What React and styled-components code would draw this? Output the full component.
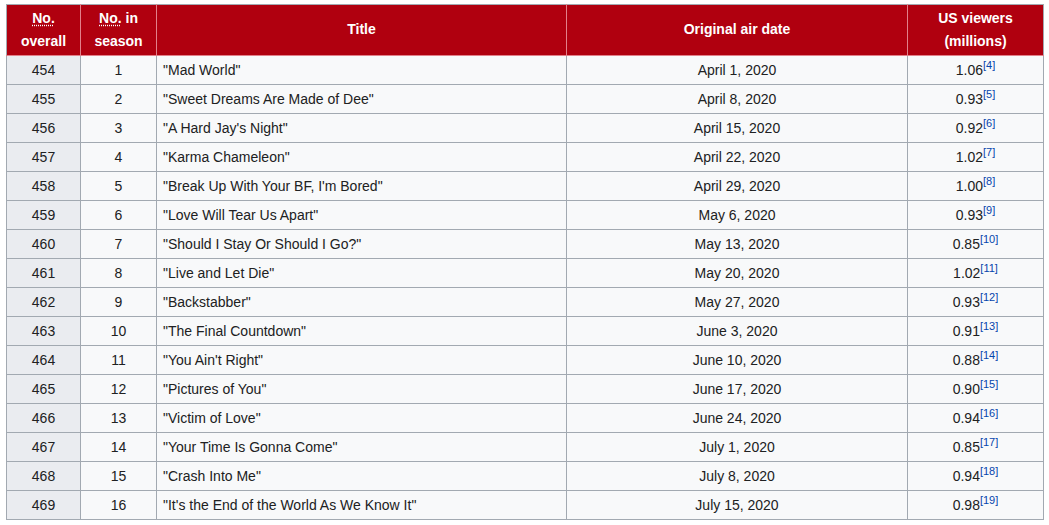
import React from "react";
import styled, { createGlobalStyle } from "styled-components";

const Global = createGlobalStyle`
  html, body { margin: 0; padding: 0; background: #ffffff; }
  body { font-family: "Liberation Sans", Arial, sans-serif; color: #202122; }
`;

const Wrap = styled.div`
  padding: 4px 0 0 6px;
`;

const Table = styled.table`
  border-collapse: collapse;
  table-layout: fixed;
  width: 1038px;
  font-size: 14px;
  line-height: 22.4px;
  background: #f8f9fa;
  border: 1px solid #a2a9b1;
`;

const HeadCell = styled.th`
  background: #b0000f;
  color: #ffffff;
  font-weight: bold;
  text-align: center;
  padding: 2px 5px 3px;
  height: 45px;
  border: 1px solid #a2a9b1;
  border-left-color: #e2808a;
  border-right-color: #e2808a;
  border-bottom-color: #e2808a;
  &:first-child { border-left-color: #a2a9b1; }
  &:last-child { border-right-color: #a2a9b1; }
`;

const Abbr = styled.abbr`
  text-decoration: underline dotted;
  text-underline-offset: 2px;
  cursor: help;
`;

const RowHead = styled.th`
  background: #eaecf0;
  font-weight: normal;
  text-align: center;
  padding: 2px 5px;
  height: 24px;
  border: 1px solid #a2a9b1;
`;

const Cell = styled.td`
  text-align: ${(p) => (p.$left ? "left" : "center")};
  padding: 2px 5px 2px ${(p) => (p.$left ? "6px" : "5px")};
  border: 1px solid #a2a9b1;
  white-space: nowrap;
`;

const Ref = styled.sup`
  font-size: 11px;
  line-height: 1;
  vertical-align: super;
  color: #0645ad;
  margin-left: 0;
`;

const episodes = [
  [454, 1, "Mad World", "April 1, 2020", "1.06", 4],
  [455, 2, "Sweet Dreams Are Made of Dee", "April 8, 2020", "0.93", 5],
  [456, 3, "A Hard Jay's Night", "April 15, 2020", "0.92", 6],
  [457, 4, "Karma Chameleon", "April 22, 2020", "1.02", 7],
  [458, 5, "Break Up With Your BF, I'm Bored", "April 29, 2020", "1.00", 8],
  [459, 6, "Love Will Tear Us Apart", "May 6, 2020", "0.93", 9],
  [460, 7, "Should I Stay Or Should I Go?", "May 13, 2020", "0.85", 10],
  [461, 8, "Live and Let Die", "May 20, 2020", "1.02", 11],
  [462, 9, "Backstabber", "May 27, 2020", "0.93", 12],
  [463, 10, "The Final Countdown", "June 3, 2020", "0.91", 13],
  [464, 11, "You Ain't Right", "June 10, 2020", "0.88", 14],
  [465, 12, "Pictures of You", "June 17, 2020", "0.90", 15],
  [466, 13, "Victim of Love", "June 24, 2020", "0.94", 16],
  [467, 14, "Your Time Is Gonna Come", "July 1, 2020", "0.85", 17],
  [468, 15, "Crash Into Me", "July 8, 2020", "0.94", 18],
  [469, 16, "It's the End of the World As We Know It", "July 15, 2020", "0.98", 19],
];

export default function App() {
  return (
    <Wrap>
      <Global />
      <Table>
        <colgroup>
          <col style={{ width: 74 }} />
          <col style={{ width: 76 }} />
          <col style={{ width: 410 }} />
          <col style={{ width: 341 }} />
          <col style={{ width: 136 }} />
        </colgroup>
        <thead>
          <tr>
            <HeadCell>
              <Abbr title="Number">No.</Abbr>
              <br />
              overall
            </HeadCell>
            <HeadCell>
              <Abbr title="Number">No.</Abbr> in
              <br />
              season
            </HeadCell>
            <HeadCell>Title</HeadCell>
            <HeadCell>Original air date</HeadCell>
            <HeadCell>
              US viewers
              <br />
              (millions)
            </HeadCell>
          </tr>
        </thead>
        <tbody>
          {episodes.map(([overall, season, title, date, viewers, ref]) => (
            <tr key={overall}>
              <RowHead scope="row">{overall}</RowHead>
              <Cell>{season}</Cell>
              <Cell $left>"{title}"</Cell>
              <Cell>{date}</Cell>
              <Cell>
                {viewers}
                <Ref>[{ref}]</Ref>
              </Cell>
            </tr>
          ))}
        </tbody>
      </Table>
    </Wrap>
  );
}
